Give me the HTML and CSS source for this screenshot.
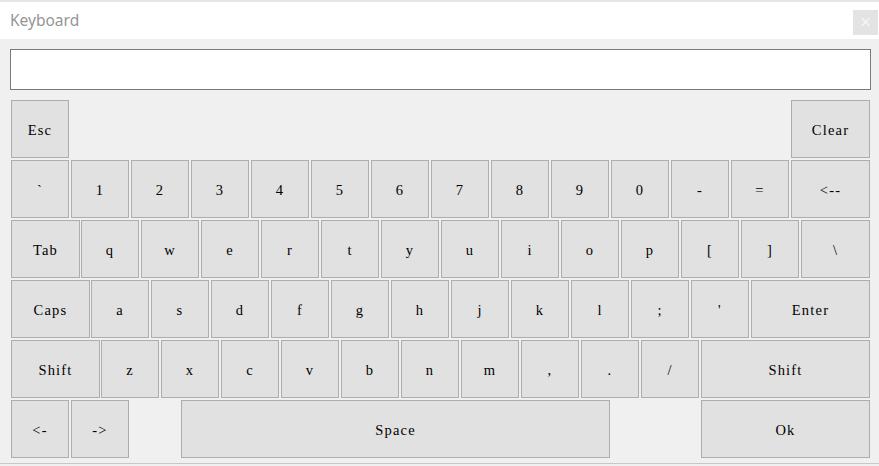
FILE: index.html
```html
<!DOCTYPE html>
<html>
<head>
<meta charset="utf-8">
<link rel="stylesheet" href="styles.css">
</head>
<body>
<div class="window">
  <div class="topstrip"></div>
  <div class="titlebar">
    <span class="title">Keyboard</span>
    <div class="close">×</div>
  </div>
  <div class="content">
    <div class="input"></div>
    <div class="keyboard">
      <div class="row">
        <div class="key">Esc</div>
        <div class="key w79 push">Clear</div>
      </div>
      <div class="row">
        <div class="key">`</div>
        <div class="key">1</div>
        <div class="key">2</div>
        <div class="key">3</div>
        <div class="key">4</div>
        <div class="key">5</div>
        <div class="key">6</div>
        <div class="key">7</div>
        <div class="key">8</div>
        <div class="key">9</div>
        <div class="key">0</div>
        <div class="key">-</div>
        <div class="key">=</div>
        <div class="key w79">&lt;--</div>
      </div>
      <div class="row">
        <div class="key w69 tight">Tab</div>
        <div class="key">q</div>
        <div class="key">w</div>
        <div class="key">e</div>
        <div class="key">r</div>
        <div class="key">t</div>
        <div class="key">y</div>
        <div class="key">u</div>
        <div class="key">i</div>
        <div class="key">o</div>
        <div class="key">p</div>
        <div class="key">[</div>
        <div class="key">]</div>
        <div class="key w69">\</div>
      </div>
      <div class="row">
        <div class="key w79 tight">Caps</div>
        <div class="key">a</div>
        <div class="key">s</div>
        <div class="key">d</div>
        <div class="key">f</div>
        <div class="key">g</div>
        <div class="key">h</div>
        <div class="key">j</div>
        <div class="key">k</div>
        <div class="key">l</div>
        <div class="key">;</div>
        <div class="key">'</div>
        <div class="key w119">Enter</div>
      </div>
      <div class="row">
        <div class="key w89 tight">Shift</div>
        <div class="key">z</div>
        <div class="key">x</div>
        <div class="key">c</div>
        <div class="key">v</div>
        <div class="key">b</div>
        <div class="key">n</div>
        <div class="key">m</div>
        <div class="key">,</div>
        <div class="key">.</div>
        <div class="key">/</div>
        <div class="key w169">Shift</div>
      </div>
      <div class="row">
        <div class="key">&lt;-</div>
        <div class="key">-&gt;</div>
        <div class="key w429 space">Space</div>
        <div class="key w169 ok">Ok</div>
      </div>
    </div>
  </div>
  <div class="bottomline"></div>
</div>
</body>
</html>
```

FILE: styles.css
```css
html, body {
  margin: 0;
  padding: 0;
  background: #f0f0f0;
}

.window {
  width: 879px;
  height: 466px;
  overflow: hidden;
  background: #f0f0f0;
}

.topstrip {
  height: 2px;
  background: #e6e6e6;
}

.titlebar {
  height: 37px;
  background: #ffffff;
  display: flex;
  align-items: flex-start;
  justify-content: space-between;
}

.title {
  margin-left: 10px;
  margin-top: 8px;
  font-family: "Noto Sans", "Open Sans", sans-serif;
  font-size: 15.5px;
  line-height: 20px;
  color: #959595;
}

.close {
  width: 25px;
  height: 25px;
  margin-top: 8px;
  margin-right: 1px;
  background: #e3e3e3;
  color: #f7f7f7;
  font-family: "DejaVu Sans", sans-serif;
  font-size: 15px;
  line-height: 25px;
  text-align: center;
}

.content {
  padding: 10px 0 0 10px;
  height: 415px;
  box-sizing: border-box;
}

.input {
  width: 861px;
  height: 41px;
  box-sizing: border-box;
  border: 1px solid #7a7a7a;
  background: #ffffff;
}

.keyboard {
  margin-top: 10px;
  margin-left: 1px;
  display: flex;
  flex-direction: column;
  gap: 2px;
}

.row {
  display: flex;
  gap: 2px;
  width: 859px;
}

.key {
  width: 58px;
  height: 58px;
  box-sizing: border-box;
  border: 1px solid #adadad;
  background: #e1e1e1;
  display: flex;
  align-items: center;
  justify-content: center;
  padding-top: 2px;
  font-family: "Liberation Serif", "DejaVu Serif", serif;
  font-size: 14.5px;
  letter-spacing: 1.2px;
  color: #000000;
  flex: none;
}

.w69 { width: 69px; }
.w79 { width: 79px; }
.w89 { width: 89px; }
.w119 { width: 119px; }
.w169 { width: 169px; }
.w429 { width: 429px; }

.tight { margin-right: -1px; }
.push { margin-left: auto; }
.space { margin-left: 50px; }
.ok { margin-left: 89px; }

.bottomline {
  height: 1px;
  background: #c8c8c8;
  margin-top: 9px;
}
```
